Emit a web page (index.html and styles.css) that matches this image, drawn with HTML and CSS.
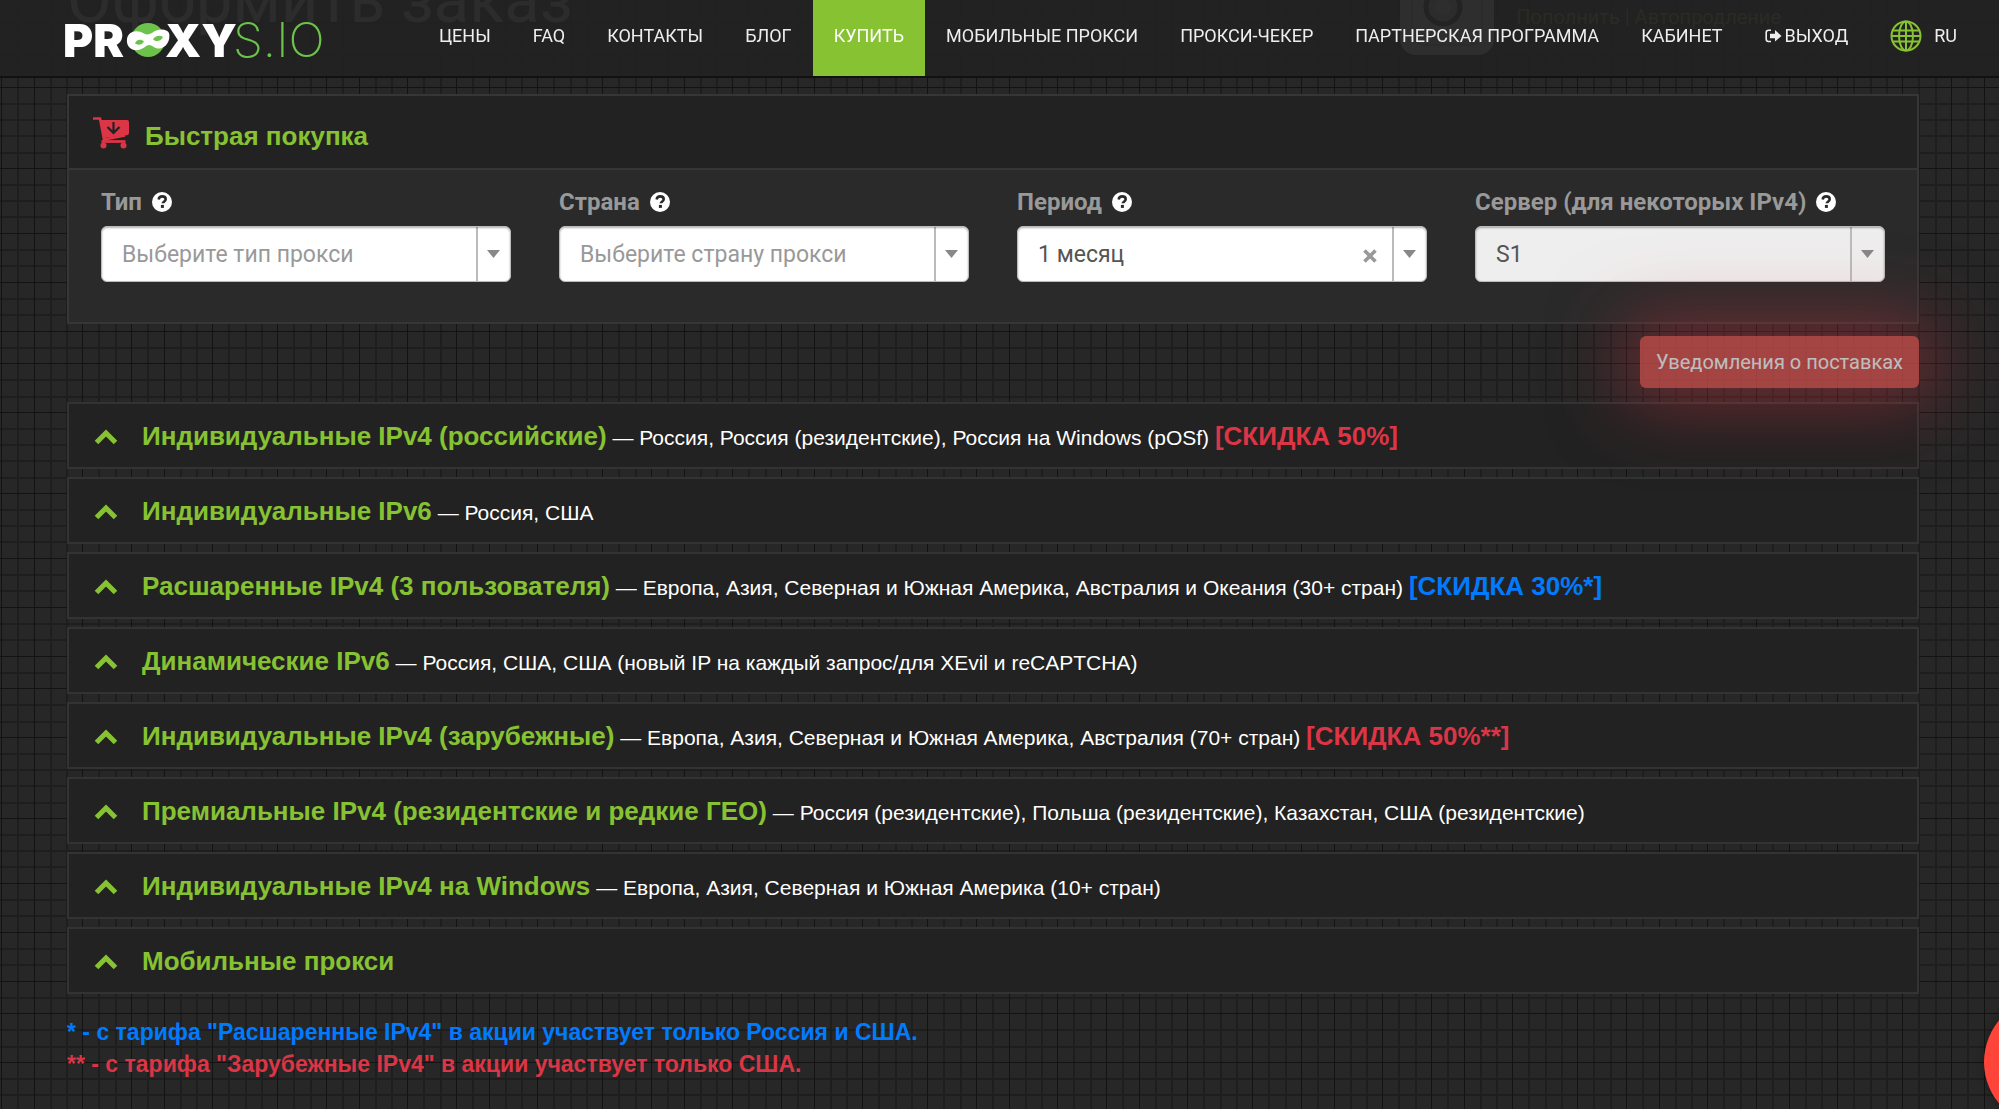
FILE: index.html
```html
<!DOCTYPE html>
<html lang="ru">
<head>
<meta charset="utf-8">
<meta name="viewport" content="width=device-width, initial-scale=1">
<title>Оформить заказ — PROXYS.IO</title>
<link rel="stylesheet" href="styles.css">
</head>
<body>
<svg class="sprite" aria-hidden="true">
  <symbol id="i-help" viewBox="0 0 20 20">
    <circle cx="10" cy="10" r="10" fill="#fff"/>
    <path d="M6.6 7.4C7 5.4 8.300 4.400 10.200 4.400C12.300 4.400 13.700 5.600 13.700 7.300C13.700 9.600 10.800 9.700 10.800 11.300" fill="none" stroke="#2a2a2a" stroke-width="2.600"/>
    <rect x="8.900" y="12.900" width="3" height="3" fill="#2a2a2a"/>
  </symbol>
  <symbol id="i-up" viewBox="0 0 24 16">
    <path d="M2.500 13.500L12 4L21.500 13.500" fill="none" stroke="#86c232" stroke-width="5"/>
  </symbol>
</svg>

<header class="topbar">
  <a class="logo" href="#" aria-label="PROXYS.IO">
    <svg viewBox="0 0 258 40" width="258" height="40">
      <g class="logo-bold"><text x="-3" y="37">PR</text><text x="99" y="37">XY</text></g>
      <ellipse cx="82" cy="20" rx="17" ry="17" fill="#6cc24a"/>
      <path d="M61 19C62 12 70 9 78 13.500C81 15 83 14.500 86 13C93 8 101 9 103 13C105 20 100 29 92 28.500C88 28 86 25 83 25C80 25 78 29 72 30C66 31 60 27 61 19Z" fill="#fff"/>
      <path d="M69 23.500C70 19.500 75 18.500 78 21.500C76 25 72 25.500 69 23.500Z" fill="#6cc24a"/>
      <path d="M87 19.500C89 15.500 94 15 97 17C95 21 91 22.500 87 19.500Z" fill="#6cc24a"/>
      <text class="logo-thin" x="167" y="37">S.IO</text>
    </svg>
  </a>
  <nav class="menu">
    <a href="#">ЦЕНЫ</a>
    <a href="#">FAQ</a>
    <a href="#">КОНТАКТЫ</a>
    <a href="#">БЛОГ</a>
    <a href="#" class="active">КУПИТЬ</a>
    <a href="#">МОБИЛЬНЫЕ ПРОКСИ</a>
    <a href="#">ПРОКСИ-ЧЕКЕР</a>
    <a href="#">ПАРТНЕРСКАЯ ПРОГРАММА</a>
    <a href="#">КАБИНЕТ</a>
    <a href="#" class="with-icon">
      <svg width="17" height="14" viewBox="0 0 17 14"><path d="M6 1.200H3.500Q1.200 1.200 1.200 3.500V10Q1.200 12.500 3.500 12.500H6" fill="none" stroke="#eee" stroke-width="1.600"/><path d="M5 4.800H10V1L16.500 7L10 12.500V9.200H5Z" fill="#eee"/></svg>
      ВЫХОД</a>
    <a href="#" class="lang">
      <svg width="32" height="32" viewBox="0 0 32 32" fill="none" stroke="#86c232" stroke-width="2"><circle cx="16" cy="16" r="14.500"/><ellipse cx="16" cy="16" rx="7" ry="14.500"/><path d="M16 1V31M1 16H31M3 10.500H29M3 21.500H29"/></svg>
      RU</a>
  </nav>
</header>

<main class="page">
  <div class="page-head">
    <h1>Оформить заказ</h1>
    <div class="balance">
      <svg width="94" height="94" viewBox="0 0 94 94"><rect width="94" height="94" rx="16" fill="#eee"/><path d="M12 8V70Q12 84 26 84H68Q82 84 82 70V8" fill="none" stroke="#bbb" stroke-width="2"/><circle cx="43" cy="46" r="17" fill="#ccc" stroke="#333" stroke-width="5"/><circle cx="43" cy="46" r="8" fill="#eee"/></svg>
      <p><a href="#">Пополнить</a> | <a href="#">Автопродление</a></p>
    </div>
  </div>

  <section class="panel">
    <h2 class="panel-title">
      <svg width="36" height="32" viewBox="0 0 36 32"><path d="M0 1.500H7L11 22.500L32 18.500" fill="none" stroke="#dc3545" stroke-width="2.600"/><path d="M7.500 3H34Q36 3 36 5V16Q36 18 34 18.300L11 21Z" fill="#dc3545"/><path d="M20.500 5V15M14.500 10L20.500 16L26.500 10" fill="none" stroke="#222" stroke-width="2.200"/><path d="M8.500 24.500H32.500" stroke="#dc3545" stroke-width="2.800"/><circle cx="10.500" cy="28.500" r="3" fill="#dc3545"/><circle cx="30.500" cy="28.500" r="3" fill="#dc3545"/></svg>
      <span>Быстрая покупка</span>
    </h2>
    <form class="fields">
      <div class="field">
        <label for="type">Тип <svg class="help"><use href="#i-help"/></svg></label>
        <select id="type" class="empty"><option>Выберите тип прокси</option></select>
      </div>
      <div class="field">
        <label for="country">Страна <svg class="help"><use href="#i-help"/></svg></label>
        <select id="country" class="empty"><option>Выберите страну прокси</option></select>
      </div>
      <div class="field">
        <label for="period">Период <svg class="help"><use href="#i-help"/></svg></label>
        <select id="period"><option>1 месяц</option></select>
        <button type="button" class="clear" aria-label="Очистить"><svg width="14" height="14" viewBox="0 0 14 14"><path d="M1.500 1.500L12.500 12.500M12.500 1.500L1.500 12.500" stroke="#999" stroke-width="3.600"/></svg></button>
      </div>
      <div class="field">
        <label for="server">Сервер (для некоторых IPv4) <svg class="help"><use href="#i-help"/></svg></label>
        <select id="server" disabled><option>S1</option></select>
      </div>
    </form>
  </section>

  <div class="actions"><button type="button" class="notify">Уведомления о поставках</button></div>

  <section class="tariffs">
    <a href="#" class="tariff"><svg class="up"><use href="#i-up"/></svg><p><strong>Индивидуальные IPv4 (российские)</strong> — Россия, Россия (резидентские), Россия на Windows (pOSf) <b class="red">[СКИДКА 50%]</b></p></a>
    <a href="#" class="tariff"><svg class="up"><use href="#i-up"/></svg><p><strong>Индивидуальные IPv6</strong> — Россия, США</p></a>
    <a href="#" class="tariff"><svg class="up"><use href="#i-up"/></svg><p><strong>Расшаренные IPv4 (3 пользователя)</strong> — Европа, Азия, Северная и Южная Америка, Австралия и Океания (30+ стран) <b class="blue">[СКИДКА 30%*]</b></p></a>
    <a href="#" class="tariff"><svg class="up"><use href="#i-up"/></svg><p><strong>Динамические IPv6</strong> — Россия, США, США (новый IP на каждый запрос/для XEvil и reCAPTCHA)</p></a>
    <a href="#" class="tariff"><svg class="up"><use href="#i-up"/></svg><p><strong>Индивидуальные IPv4 (зарубежные)</strong> — Европа, Азия, Северная и Южная Америка, Австралия (70+ стран) <b class="red">[СКИДКА 50%**]</b></p></a>
    <a href="#" class="tariff"><svg class="up"><use href="#i-up"/></svg><p><strong>Премиальные IPv4 (резидентские и редкие ГЕО)</strong> — Россия (резидентские), Польша (резидентские), Казахстан, США (резидентские)</p></a>
    <a href="#" class="tariff"><svg class="up"><use href="#i-up"/></svg><p><strong>Индивидуальные IPv4 на Windows</strong> — Европа, Азия, Северная и Южная Америка (10+ стран)</p></a>
    <a href="#" class="tariff"><svg class="up"><use href="#i-up"/></svg><p><strong>Мобильные прокси</strong></p></a>
  </section>

  <div class="notes">
    <p class="blue">* - с тарифа "Расшаренные IPv4" в акции участвует только Россия и США.</p>
    <p class="red">** - с тарифа "Зарубежные IPv4" в акции участвует только США.</p>
  </div>
</main>
<button type="button" class="chat" aria-label="Чат"></button>
</body>
</html>
```
FILE: styles.css
```css
* { box-sizing: border-box; }

body {
  margin: 0;
  color: #fff;
  font-family: Roboto, "Liberation Sans", sans-serif;
  background: #272727 url("data:image/svg+xml,%3Csvg xmlns='http://www.w3.org/2000/svg' width='325' height='325' shape-rendering='crispEdges'%3E%3Cpath fill='none' stroke='%231e1e1e' stroke-width='2' d='M18 0V325M51 0V325M67 0V325M99 0V325M116 0V325M148 0V325M181 0V325M197 0V325M229 0V325M246 0V325M262 0V325M294 0V325M311 0V325M0 23H325M0 55H325M0 72H325M0 104H325M0 120H325M0 136H325M0 153H325M0 185H325M0 201H325M0 217H325M0 250H325M0 266H325M0 299H325M0 315H325'/%3E%3Cpath fill='%23131313' d='M1 0h1v325h-1zM34 0h1v325h-1zM82 0h1v325h-1zM131 0h1v325h-1zM164 0h1v325h-1zM212 0h1v325h-1zM277 0h1v325h-1zM0 6h325v1h-325zM0 38h325v1h-325zM0 87h325v1h-325zM0 168h325v1h-325zM0 233h325v1h-325zM0 282h325v1h-325z'/%3E%3C/svg%3E");
}

a { color: inherit; text-decoration: none; }
h1, h2, p { margin: 0; }
.sprite { display: none; }
.red { color: #dc3545; }
.blue { color: #007bff; }

/* Fixed header, slightly see-through */
.topbar {
  position: fixed;
  inset: 0 0 auto;
  z-index: 2;
  display: flex;
  justify-content: space-between;
  height: 78px;
  padding: 0 21px 0 66px;
  background: rgba(34, 34, 34, 0.94);
  border-bottom: 2px solid #111;
}
.logo { padding-top: 20px; }
.logo svg { display: block; overflow: visible; }
.logo-bold { font: 900 46px Inter, sans-serif; fill: #fff; }
.logo-thin { font: 200 48px Inter, sans-serif; fill: #6cc24a; }
.menu { display: flex; font-size: 18px; line-height: 72px; white-space: nowrap; }
.menu a { padding: 0 21px; height: 76px; color: #eee; }
.menu .active { background: #86c232; color: #fff; }
.menu .with-icon { display: flex; align-items: center; gap: 3px; height: 72px; }
.menu .lang { display: flex; align-items: center; gap: 12px; height: 72px; }

.page {
  min-height: 100vh;
  padding: 0 80px 34px 67px;
  border-bottom: 1px solid #777;
}
.page-head {
  display: flex;
  justify-content: space-between;
  align-items: flex-start;
  height: 94px;
}
.page-head h1 { font-size: 65px; line-height: 0; font-weight: 400; color: #ccc; }
.balance {
  display: flex;
  gap: 22px;
  margin-top: -39px;
  padding-right: 138px;
  font-size: 20px;
  line-height: 24px;
  color: #aaa;
}
.balance p { margin-top: 44px; }
.balance a { color: #86c232; }

.panel { background: #2a2a2a; border: 2px solid #363636; }
.panel-title {
  display: flex;
  align-items: center;
  gap: 16px;
  height: 74px;
  padding: 8px 0 0 24px;
  font: 700 26px/32px "Liberation Sans", Arial, sans-serif;
  color: #86c232;
  background: #222;
  border-bottom: 2px solid #363636;
}
.panel-title svg { margin-bottom: 6px; }
.fields {
  display: grid;
  grid-template-columns: repeat(4, 1fr);
  gap: 48px;
  padding: 16px 32px 40px;
}
.field { position: relative; }
.field label {
  display: flex;
  align-items: center;
  gap: 10px;
  height: 32px;
  margin-bottom: 8px;
  font-size: 24px;
  font-weight: 700;
  color: #999;
  white-space: nowrap;
}
.help { width: 20px; height: 20px; }
.field select {
  appearance: none;
  display: block;
  width: 100%;
  height: 56px;
  padding: 0 48px 0 20px;
  font: 23px Roboto, sans-serif;
  color: #555;
  border: 1px solid #bbb;
  border-radius: 6px;
  box-shadow: inset 0 1px 2px rgba(0, 0, 0, 0.3);
  background:
    url("data:image/svg+xml,%3Csvg xmlns='http://www.w3.org/2000/svg' width='13' height='8'%3E%3Cpath d='M0 0H13L6.500 8Z' fill='%23888'/%3E%3C/svg%3E") no-repeat right 10px center,
    linear-gradient(#bbb, #bbb) no-repeat right 32px center / 2px 100%,
    #fff;
}
.field select.empty { color: #999; }
.field select:disabled { background-color: #eee; opacity: 1; }
.clear {
  position: absolute;
  right: 50px;
  top: 63px;
  padding: 0;
  border: 0;
  background: none;
}
.clear svg { display: block; }

.actions { display: flex; justify-content: flex-end; padding: 12px 0 14px; }
.notify {
  position: relative;
  height: 52px;
  padding: 0 16px;
  font: 20px Roboto, sans-serif;
  color: #fff;
  background: #d9534f;
  border: 0;
  border-radius: 6px;
  box-shadow: 0 0 75px 15px rgba(220, 53, 69, 0.6);
  opacity: 0.7;
}

.tariffs { display: grid; gap: 8px; }
.tariff {
  display: flex;
  align-items: center;
  gap: 24px;
  height: 67px;
  padding: 2px 24px 0 25px;
  font: 21px/32px "Liberation Sans", Arial, sans-serif;
  background: #222;
  border: 2px solid #333;
}
.up { flex: none; width: 24px; height: 16px; }
.tariff strong { font-size: 26px; color: #86c232; }
.tariff b { font-size: 26px; }

.notes {
  margin-top: 22px;
  font: 700 23px/32px "Liberation Sans", Arial, sans-serif;
}

.chat {
  position: fixed;
  right: -115px;
  bottom: -18px;
  width: 130px;
  height: 130px;
  padding: 0;
  border: 0;
  border-radius: 50%;
  background: #ff453a;
  box-shadow: 0 0 8px rgba(0, 0, 0, 0.3);
}
```
